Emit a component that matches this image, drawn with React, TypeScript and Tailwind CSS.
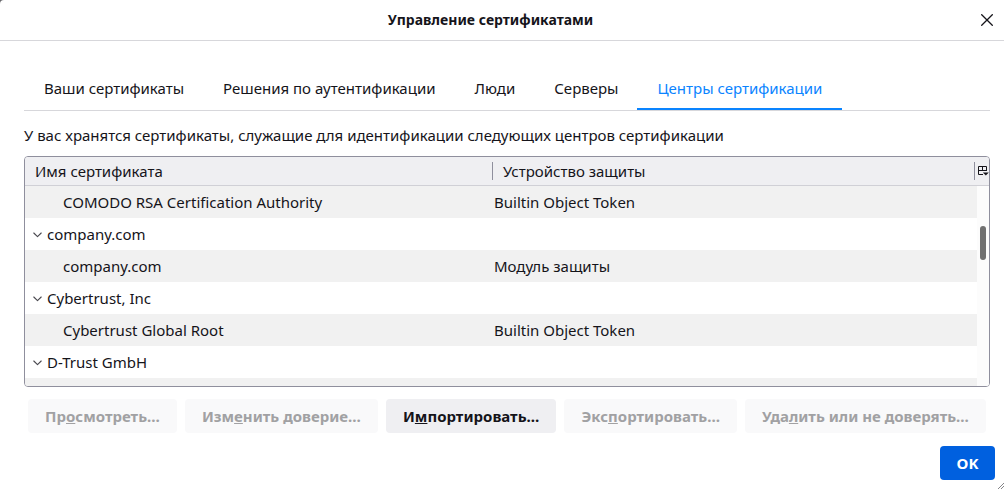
const tabs = [
  "Ваши сертификаты",
  "Решения по аутентификации",
  "Люди",
  "Серверы",
  "Центры сертификации",
];

const rows = [
  { name: "COMODO RSA Certification Authority", device: "Builtin Object Token", group: false },
  { name: "company.com", device: "", group: true },
  { name: "company.com", device: "Модуль защиты", group: false },
  { name: "Cybertrust, Inc", device: "", group: true },
  { name: "Cybertrust Global Root", device: "Builtin Object Token", group: false },
  { name: "D-Trust GmbH", device: "", group: true },
  { name: "", device: "", group: false },
];

const actions = [
  { before: "Пр", key: "о", after: "смотреть…", enabled: false },
  { before: "Изм", key: "е", after: "нить доверие…", enabled: false },
  { before: "И", key: "м", after: "портировать…", enabled: true },
  { before: "Экс", key: "п", after: "ортировать…", enabled: false },
  { before: "Уда", key: "л", after: "ить или не доверять…", enabled: false },
];

function TitleBar() {
  return (
    <header className="flex h-[41px] shrink-0 items-center border-b border-[#d7d7db] pr-[7px] pl-1">
      <h1 className="flex-1 text-center text-[14px] font-bold">Управление сертификатами</h1>
      <button type="button" aria-label="Закрыть" className="flex size-5 items-center justify-center">
        <svg className="size-3" viewBox="0 0 12 12" fill="none" stroke="currentColor" strokeWidth="1.3">
          <path d="M0.3 0.3 11.7 11.7M11.7 0.3 0.3 11.7" />
        </svg>
      </button>
    </header>
  );
}

function Tabs() {
  return (
    <div role="tablist" className="flex h-[42px] shrink-0 border-b border-[#d7d7db]">
      {tabs.map((tab, i) => {
        const active = i === tabs.length - 1;
        return (
          <button
            key={tab}
            type="button"
            role="tab"
            aria-selected={active}
            className={
              active
                ? "border-b-2 border-[#0a84ff] px-5 pb-0.5 text-[#0a84ff]"
                : "border-b-2 border-transparent pr-[19px] pl-5 pb-0.5"
            }
          >
            {tab}
          </button>
        );
      })}
    </div>
  );
}

function CertificateTree() {
  return (
    <div className="relative mt-[11px] min-h-0 flex-1 overflow-hidden rounded border border-[#8f8f9d]">
      <table className="w-full table-fixed border-separate border-spacing-0 text-left">
        <colgroup>
          <col className="w-[467px]" />
          <col />
          <col className="w-[15px]" />
        </colgroup>
        <thead className="bg-[#efeff2]">
          <tr className="h-[29px]">
            <th scope="col" className="border-b border-[#d0d0d6] p-0 pl-2.5 font-normal">
              Имя сертификата
            </th>
            <th scope="col" className="border-b border-[#d0d0d6] p-0 font-normal">
              <span className="block h-[18px] border-l border-[#8f8f9d] pl-2.5 leading-[18px]">
                Устройство защиты
              </span>
            </th>
            <th scope="col" className="border-b border-[#d0d0d6] p-0">
              <button
                type="button"
                aria-label="Выбрать столбцы"
                className="flex h-[18px] w-full items-center border-l border-[#8f8f9d] pl-[3px]"
              >
                <svg className="h-2.5 w-[11px] shrink-0" viewBox="0 0 11 10" fill="none" stroke="currentColor">
                  <path d="M5 8.5H0.5V0.5H8.5V5M0.5 4.5H8.5M4.5 0.5V4.5" />
                  <path d="M4.8 6.4H10.8L7.8 9.6Z" fill="currentColor" stroke="none" />
                </svg>
              </button>
            </th>
          </tr>
        </thead>
        <tbody>
          {rows.map((row, i) => (
            <tr key={i} className="h-8 odd:bg-[#f1f1f1]">
              <td className="p-0">
                <span className={row.group ? "flex items-center gap-[5px] pl-2" : "block pl-[38px]"}>
                  {row.group && (
                    <svg
                      className="h-2 w-[9px] shrink-0"
                      viewBox="0 0 9 8"
                      fill="none"
                      stroke="#4a494f"
                      strokeWidth="1.1"
                      strokeLinecap="round"
                      strokeLinejoin="round"
                    >
                      <path d="M0.8 3 4.5 6.6 8.2 3" />
                    </svg>
                  )}
                  {row.name}
                </span>
              </td>
              <td className="p-0 pl-0.5" colSpan={2}>{row.device}</td>
            </tr>
          ))}
        </tbody>
      </table>
      <div className="absolute top-[29px] right-0 bottom-0 w-3 bg-[#fcfcfc] px-[3px] pt-10">
        <div className="h-[34px] rounded-full bg-[#707070]" />
      </div>
    </div>
  );
}

export default function App() {
  return (
    <div className="h-screen bg-[#66666a]">
      <main className="relative flex h-full flex-col rounded-tl-[4px] bg-white font-['Noto_Sans','Open_Sans',sans-serif] text-[15px] leading-5 text-[#15141a]">
        <TitleBar />
        <div className="flex min-h-0 flex-1 flex-col pt-7 pr-3.5 pl-6">
          <Tabs />
          <p className="mt-[14px]">
            У вас хранятся сертификаты, служащие для идентификации следующих центров сертификации
          </p>
          <CertificateTree />
          <div className="flex shrink-0 gap-2 px-1 pt-3">
            {actions.map((a) => (
              <button
                key={a.before}
                type="button"
                disabled={!a.enabled}
                className={
                  a.enabled
                    ? "h-[34px] flex-auto rounded bg-[#efeff2] px-3 font-bold whitespace-nowrap"
                    : "h-[34px] flex-auto rounded bg-[#f9f9fa] px-3 font-bold whitespace-nowrap text-[#a1a1a3]"
                }
              >
                {a.before}
                <span className="underline">{a.key}</span>
                {a.after}
              </button>
            ))}
          </div>
        </div>
        <footer className="flex shrink-0 justify-end pt-[13px] pr-[9px] pb-[9px]">
          <button type="button" className="h-[34px] w-[55px] rounded bg-[#0060df] font-bold text-white">
            OK
          </button>
        </footer>
        <svg className="absolute right-0 bottom-0 size-[6px]" viewBox="0 0 6 6" stroke="#77777b" strokeWidth="0.9">
          <path d="M0 6 6 0M3 6 6 3" />
        </svg>
      </main>
    </div>
  );
}
